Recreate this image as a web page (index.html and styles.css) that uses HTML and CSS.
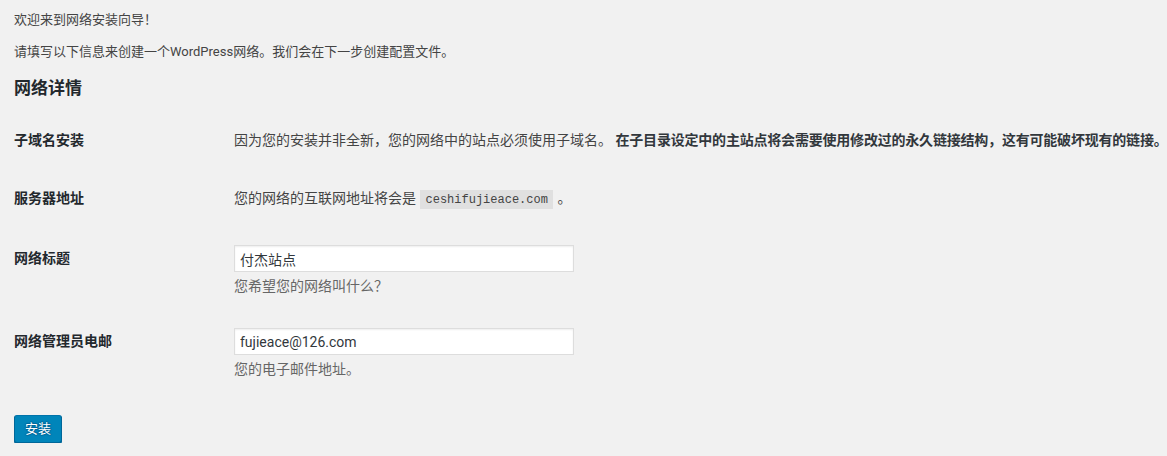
FILE: index.html
```html
<!DOCTYPE html>
<html lang="zh-CN">
<head>
    <meta charset="UTF-8">
    <title>创建WordPress站点网络</title>
    <link rel="stylesheet" href="styles.css">
</head>
<body>
    <div class="wrap">
        <p>欢迎来到网络安装向导！</p>
        <p>请填写以下信息来创建一个WordPress网络。我们会在下一步创建配置文件。</p>

        <h3>网络详情</h3>

        <div class="form-table">
            <div class="row">
                <div class="th">子域名安装</div>
                <div class="td nowrap">因为您的安装并非全新，您的网络中的站点必须使用子域名。 <strong>在子目录设定中的主站点将会需要使用修改过的永久链接结构，这有可能破坏现有的链接。</strong></div>
            </div>
            <div class="row">
                <div class="th">服务器地址</div>
                <div class="td">您的网络的互联网地址将会是 <code>ceshifujieace.com</code> 。</div>
            </div>
            <div class="row">
                <div class="th">网络标题</div>
                <div class="td field">
                    <input type="text" class="regular-text" value="付杰站点">
                    <p class="description">您希望您的网络叫什么？</p>
                </div>
            </div>
            <div class="row">
                <div class="th">网络管理员电邮</div>
                <div class="td field">
                    <input type="text" class="regular-text" value="fujieace@126.com">
                    <p class="description">您的电子邮件地址。</p>
                </div>
            </div>
        </div>

        <p class="submit"><button class="button-primary">安装</button></p>
    </div>
</body>
</html>
```

FILE: styles.css
```css
* {
    box-sizing: border-box;
}

html, body {
    margin: 0;
    padding: 0;
}

body {
    background-color: #f1f1f1;
    color: #444;
    font-family: Roboto, "Noto Sans CJK SC", sans-serif;
    font-size: 13px;
    line-height: 19px;
    overflow: hidden;
}

.wrap {
    padding: 10px 14px 0 14px;
}

.wrap p {
    margin: 0 0 13px 0;
}

h3 {
    color: #23282d;
    font-size: 17px;
    font-weight: 600;
    line-height: 24px;
    margin: 15px 0 11px 0;
}

/* tabla del formulario */
.form-table {
    font-size: 14px;
}

.row {
    display: flex;
    align-items: flex-start;
}

.th {
    width: 210px;
    flex-shrink: 0;
    padding: 20px 10px 20px 0;
    line-height: 18.2px;
    font-weight: 600;
    color: #23282d;
}

.td {
    padding: 20px 10px;
    line-height: 18.2px;
}

.nowrap {
    white-space: nowrap;
}

.td strong {
    font-weight: 700;
    color: #32373c;
    letter-spacing: -0.2px;
}

code {
    font-family: "Liberation Mono", monospace;
    font-size: 12px;
    background-color: rgba(0, 0, 0, .07);
    padding: 3px 5px 2px 5px;
    margin: 0 1px;
}

.field {
    padding: 15px 10px 15px 10px;
}

.regular-text {
    display: block;
    width: 340px;
    height: 27px;
    margin: 1px 0;
    padding: 3px 5px;
    border: 1px solid #ddd;
    background-color: #fff;
    box-shadow: inset 0 1px 2px rgba(0, 0, 0, .07);
    color: #32373c;
    font-family: Roboto, "Noto Sans CJK SC", sans-serif;
    font-size: 14px;
    outline: none;
}

.wrap .description {
    margin: 4px 0 0 0;
    line-height: 21px;
    color: #666;
}

.wrap .submit {
    margin: 20px 0 0 0;
}

.button-primary {
    height: 28px;
    padding: 0 10px 1px 10px;
    border: 1px solid #0073aa;
    border-color: #0073aa #006799 #006799;
    border-radius: 3px;
    background-color: #0085ba;
    box-shadow: 0 1px 0 #006799;
    color: #fff;
    font-family: Roboto, "Noto Sans CJK SC", sans-serif;
    font-size: 13px;
    line-height: 26px;
    text-shadow: 0 -1px 1px #006799, 1px 0 1px #006799, 0 1px 1px #006799, -1px 0 1px #006799;
}
```
